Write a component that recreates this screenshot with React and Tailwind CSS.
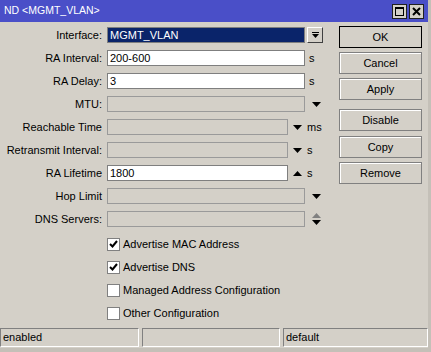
import React from 'react';

const font = { fontFamily: '"Liberation Sans", Arial, sans-serif' };

const Down = ({ gray }) => (
  <svg width="9" height="5" viewBox="0 0 9 5" className="block">
    <polygon points="0,0 9,0 4.5,5" fill={gray ? '#808080' : '#000'} />
  </svg>
);

const Up = ({ gray }) => (
  <svg width="9" height="5" viewBox="0 0 9 5" className="block">
    <polygon points="0,5 9,5 4.5,0" fill={gray ? '#808080' : '#000'} />
  </svg>
);

const Label = ({ children }) => (
  <div className="w-[102px] text-right whitespace-nowrap">{children}</div>
);

const Field = ({ value, disabled, short }) => (
  <div
    className={`${short ? 'w-[181px]' : 'w-[198px]'} h-[16px] ml-[5px] border px-[2px] leading-[14px] ${
      disabled ? 'bg-[#d4d0c8] border-[#9a9a9a]' : 'bg-white border-[#7f7f7f]'
    }`}
  >
    {value}
  </div>
);

const Row = ({ children, className = '' }) => (
  <div className={`flex items-center h-[16px] ${className}`}>{children}</div>
);

const Check = ({ checked, label, className = '' }) => (
  <div className={`flex items-center h-[16px] pl-[107px] ${className}`}>
    <div className="w-[13px] h-[13px] bg-white border border-[#808080] flex items-center justify-center">
      {checked && (
        <svg width="9" height="8" viewBox="0 0 9 8">
          <polyline points="1,4 3.5,6.5 8,1" fill="none" stroke="#000" strokeWidth="2" />
        </svg>
      )}
    </div>
    <span className="ml-[3px]">{label}</span>
  </div>
);

const Btn = ({ children, primary, className = '' }) => (
  <button
    className={`w-[83px] h-[22px] bg-[#d4d0c8] text-[11px] text-black flex items-center justify-center ${
      primary ? 'border border-black' : 'border border-[#808080] shadow-[inset_1px_1px_0_#fff]'
    } ${className}`}
  >
    {children}
  </button>
);

export default function App() {
  return (
    <div
      className="w-[431px] h-[352px] bg-[#d4d0c8] flex flex-col text-[11px] text-black overflow-hidden border-r-[3px] border-b-[4px] border-[#c4c0b8]"
      style={font}
    >
      {/* title bar */}
      <div className="h-[22px] shrink-0 bg-[#4a4fc8] flex items-center justify-between pl-[4px] pr-[4px]">
        <span className="text-white text-[10.5px]">ND &lt;MGMT_VLAN&gt;</span>
        <div className="flex gap-[2px]">
          <div className="w-[15px] h-[15px] bg-[#d4d0c8] border border-[#202020] flex items-center justify-center">
            <div className="w-[9px] h-[9px] border border-black border-t-2" />
          </div>
          <div className="w-[15px] h-[15px] bg-[#d4d0c8] border border-[#202020] flex items-center justify-center">
            <svg width="9" height="9" viewBox="0 0 9 9">
              <path d="M1 1 L8 8 M8 1 L1 8" stroke="#000" strokeWidth="2" />
            </svg>
          </div>
        </div>
      </div>

      {/* body */}
      <div className="flex flex-1">
        <div className="w-[339px] pt-[5px] flex flex-col gap-[7px]">
          <Row>
            <Label>Interface:</Label>
            <div className="w-[198px] h-[16px] ml-[5px] bg-[#0a246a] border border-[#7f7f7f] text-white px-[2px] leading-[14px]">
              MGMT_VLAN
            </div>
            <div className="w-[16px] h-[16px] ml-[2px] bg-[#d4d0c8] border border-t-white border-l-white border-b-[#404040] border-r-[#404040] flex flex-col items-center justify-center gap-[1px]">
              <div className="w-[7px] h-[1px] bg-black" />
              <svg width="7" height="4" viewBox="0 0 7 4" className="block">
                <polygon points="0,0 7,0 3.5,4" fill="#000" />
              </svg>
            </div>
          </Row>
          <Row>
            <Label>RA Interval:</Label>
            <Field value="200-600" />
            <span className="ml-[4px]">s</span>
          </Row>
          <Row>
            <Label>RA Delay:</Label>
            <Field value="3" />
            <span className="ml-[4px]">s</span>
          </Row>
          <Row>
            <Label>MTU:</Label>
            <Field disabled />
            <div className="ml-[7px]"><Down /></div>
          </Row>
          <Row>
            <Label>Reachable Time</Label>
            <Field disabled short />
            <div className="ml-[5px]"><Down /></div>
            <span className="ml-[5px]">ms</span>
          </Row>
          <Row>
            <Label>Retransmit Interval:</Label>
            <Field disabled short />
            <div className="ml-[5px]"><Down /></div>
            <span className="ml-[5px]">s</span>
          </Row>
          <Row>
            <Label>RA Lifetime</Label>
            <Field value="1800" short />
            <div className="ml-[5px]"><Up /></div>
            <span className="ml-[5px]">s</span>
          </Row>
          <Row>
            <Label>Hop Limit</Label>
            <Field disabled />
            <div className="ml-[7px]"><Down /></div>
          </Row>
          <Row>
            <Label>DNS Servers:</Label>
            <Field disabled />
            <div className="ml-[7px] flex flex-col gap-[2px]">
              <Up gray />
              <Down />
            </div>
          </Row>
          <Check checked label="Advertise MAC Address" className="mt-[2px]" />
          <Check checked label="Advertise DNS" />
          <Check label="Managed Address Configuration" />
          <Check label="Other Configuration" />
        </div>

        <div className="pt-[4px] flex flex-col">
          <Btn primary>OK</Btn>
          <Btn className="mt-[4px]">Cancel</Btn>
          <Btn className="mt-[4px]">Apply</Btn>
          <Btn className="mt-[9px]">Disable</Btn>
          <Btn className="mt-[5px]">Copy</Btn>
          <Btn className="mt-[4px]">Remove</Btn>
        </div>
      </div>

      {/* status bar */}
      <div className="h-[19px] shrink-0 flex gap-[3px] mb-[1px]">
        <div className="w-[139px] border border-t-[#808080] border-l-[#808080] border-b-white border-r-white pl-[2px] leading-[17px]">
          enabled
        </div>
        <div className="w-[138px] border border-t-[#808080] border-l-[#808080] border-b-white border-r-white" />
        <div className="w-[145px] border border-t-[#808080] border-l-[#808080] border-b-white border-r-white pl-[2px] leading-[17px]">
          default
        </div>
      </div>
    </div>
  );
}
